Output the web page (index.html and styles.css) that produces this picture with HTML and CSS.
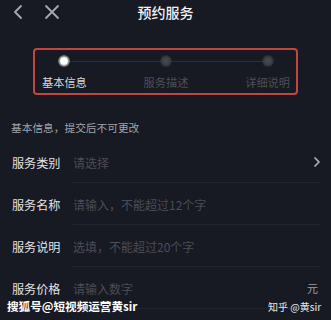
FILE: index.html
```html
<!DOCTYPE html>
<html lang="zh">
<head>
<meta charset="utf-8">
<link rel="stylesheet" href="styles.css">
</head>
<body>
<div class="page">
  <header class="nav">
    <div class="nav-icons">
      <svg class="ico-back" width="12" height="16" viewBox="0 0 12 16"><path d="M9 2 L3 8 L9 14" fill="none" stroke="#a9aab0" stroke-width="1.8" stroke-linecap="round" stroke-linejoin="round"/></svg>
      <svg class="ico-close" width="16" height="16" viewBox="0 0 16 16"><path d="M2 2 L14 14 M14 2 L2 14" fill="none" stroke="#a9aab0" stroke-width="1.8" stroke-linecap="round"/></svg>
    </div>
    <div class="nav-title">预约服务</div>
  </header>

  <div class="stepper">
    <div class="steps">
      <div class="step active"><span class="dot"></span><span class="step-label">基本信息</span></div>
      <div class="step"><span class="dot"></span><span class="step-label">服务描述</span></div>
      <div class="step"><span class="dot"></span><span class="step-label">详细说明</span></div>
    </div>
  </div>

  <p class="hint">基本信息，提交后不可更改</p>

  <div class="form">
    <div class="row">
      <span class="label">服务类别</span>
      <div class="field"><span class="ph">请选择</span>
        <svg class="chev" width="8" height="12" viewBox="0 0 8 12"><path d="M2 2 L6 6 L2 10" fill="none" stroke="#b4b5ba" stroke-width="1.7" stroke-linecap="round" stroke-linejoin="round"/></svg>
      </div>
    </div>
    <div class="row">
      <span class="label">服务名称</span>
      <div class="field"><span class="ph">请输入，不能超过12个字</span></div>
    </div>
    <div class="row">
      <span class="label">服务说明</span>
      <div class="field"><span class="ph">选填，不能超过20个字</span></div>
    </div>
    <div class="row">
      <span class="label">服务价格</span>
      <div class="field"><span class="ph">请输入数字</span><span class="unit">元</span></div>
    </div>
  </div>

  <div class="wm-left">搜狐号@短视频运营黄sir</div>
  <div class="wm-right">知乎 @黄sir</div>
</div>
</body>
</html>
```

FILE: styles.css
```css
* { box-sizing: border-box; }
html, body {
  margin: 0;
  padding: 0;
  background: #171923;
}
body {
  font-family: "Noto Sans CJK SC", "Noto Sans", sans-serif;
  width: 331px;
  height: 320px;
  overflow: hidden;
}
.page {
  position: relative;
  width: 331px;
  height: 320px;
  background: #171923;
}
.nav {
  position: relative;
  height: 26px;
  display: flex;
  align-items: center;
  justify-content: center;
}
.nav-icons {
  position: absolute;
  left: 12px;
  top: 4px;
  display: flex;
  align-items: center;
  gap: 20px;
}
.ico-back, .ico-close { display: block; }
.nav-title {
  color: #f2f2f4;
  font-size: 14px;
  font-weight: 500;
  line-height: 20px;
  margin-top: -2px;
}
.stepper {
  margin: 22px 0 0 33px;
  width: 265px;
  height: 47px;
  border: 2px solid #c2463d;
  border-radius: 4px;
  padding: 5px 6px 0 7px;
}
.steps {
  position: relative;
  display: flex;
  justify-content: space-between;
}
.steps::before {
  content: "";
  position: absolute;
  left: 22px;
  right: 22px;
  top: 6px;
  height: 1px;
  background: #2b2e37;
}
.step {
  position: relative;
  display: flex;
  flex-direction: column;
  align-items: center;
  gap: 8px;
}
.dot {
  width: 12px;
  height: 12px;
  border-radius: 50%;
  background: radial-gradient(circle, #4a4c54 0, #3c3e46 45%, rgba(60,62,70,0.3) 75%, rgba(60,62,70,0) 100%);
}
.step.active .dot {
  background: radial-gradient(circle, #ffffff 0, #ffffff 40%, #8c8d93 55%, #55575e 75%, rgba(80,82,90,0.2) 100%);
}
.step-label {
  font-size: 11.2px;
  line-height: 14px;
  color: #4e5058;
  white-space: nowrap;
}
.step.active .step-label { color: #d6d7db; }
.hint {
  margin: 26px 0 0 11px;
  font-size: 10.7px;
  line-height: 14px;
  color: #a3a4aa;
}
.form { margin-top: 6px; }
.row {
  display: flex;
  height: 42px;
  align-items: stretch;
}
.label {
  width: 73px;
  flex: none;
  padding-left: 12px;
  font-size: 12.1px;
  color: #e2e3e6;
  display: flex;
  align-items: center;
  white-space: nowrap;
}
.field {
  flex: 1;
  margin-right: 11px;
  border-bottom: 1px solid #22252e;
  display: flex;
  align-items: center;
  justify-content: space-between;
  padding-top: 1px;
}
.ph {
  font-size: 12px;
  color: #4b4d56;
  white-space: nowrap;
}
.chev { display: block; margin-right: -1px; }
.unit {
  font-size: 11px;
  color: #a0a1a7;
  margin-right: 2px;
}
.wm-left {
  position: absolute;
  left: 7px;
  top: 298px;
  font-size: 11.6px;
  font-weight: 700;
  line-height: 16px;
  color: #ffffff;
  white-space: nowrap;
}
.wm-right {
  position: absolute;
  left: 268px;
  top: 299px;
  font-size: 10px;
  line-height: 16px;
  color: #e8e8ea;
  white-space: nowrap;
}
```
